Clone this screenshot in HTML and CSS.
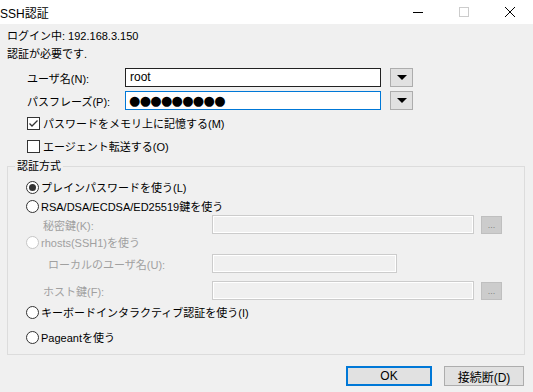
FILE: index.html
```html
<!DOCTYPE html>
<html lang="ja">
<head>
    <meta charset="UTF-8">
    <title>SSH認証</title>
    <link rel="stylesheet" href="styles.css">
</head>
<body>

    <!-- タイトルバー -->
    <div class="titlebar">
        <div class="title">SSH認証</div>
        <div class="controls">
            <span class="ctrl">
                <svg width="10" height="10" viewBox="0 0 10 10"><path d="M0 5.5H10" stroke="#000" stroke-width="1"/></svg>
            </span>
            <span class="ctrl">
                <svg width="10" height="10" viewBox="0 0 10 10"><rect x="0.5" y="0.5" width="9" height="9" fill="none" stroke="#ccc" stroke-width="1"/></svg>
            </span>
            <span class="ctrl">
                <svg width="10" height="10" viewBox="0 0 10 10"><path d="M0 0L10 10M10 0L0 10" stroke="#000" stroke-width="1"/></svg>
            </span>
        </div>
    </div>

    <div class="content">
        <div class="line">ログイン中: 192.168.3.150</div>
        <div class="line">認証が必要です.</div>

        <div class="row row-user">
            <span class="label">ユーザ名(N):</span>
            <div class="edit">root</div>
            <span class="drop"><span class="tri"></span></span>
        </div>
        <div class="row row-pass">
            <span class="label">パスフレーズ(P):</span>
            <div class="edit focus dots">●●●●●●●●●</div>
            <span class="drop"><span class="tri"></span></span>
        </div>

        <div class="check check-1">
            <span class="box checked">
                <svg width="11" height="11" viewBox="0 0 11 11"><path d="M1.5 5.5L4 8L9.5 2.5" fill="none" stroke="#333" stroke-width="1.3"/></svg>
            </span>
            <span>パスワードをメモリ上に記憶する(M)</span>
        </div>
        <div class="check check-2">
            <span class="box"></span>
            <span>エージェント転送する(O)</span>
        </div>

        <fieldset class="group">
            <legend>認証方式</legend>

            <div class="radio r1"><span class="dot on"></span>プレインパスワードを使う(L)</div>
            <div class="radio r2"><span class="dot"></span>RSA/DSA/ECDSA/ED25519鍵を使う</div>

            <div class="sub sub-key">
                <span class="sublabel">秘密鍵(K):</span>
                <div class="edit off wide"></div>
                <span class="more">...</span>
            </div>

            <div class="radio r3 disabled"><span class="dot"></span>rhosts(SSH1)を使う</div>

            <div class="sub sub-local">
                <span class="sublabel indent">ローカルのユーザ名(U):</span>
                <div class="edit off narrow"></div>
            </div>
            <div class="sub sub-host">
                <span class="sublabel">ホスト鍵(F):</span>
                <div class="edit off wide"></div>
                <span class="more">...</span>
            </div>

            <div class="radio r4"><span class="dot"></span>キーボードインタラクティブ認証を使う(I)</div>
            <div class="radio r5"><span class="dot"></span>Pageantを使う</div>
        </fieldset>

        <div class="buttons">
            <button class="btn default">OK</button>
            <button class="btn">接続断(D)</button>
        </div>
    </div>

</body>
</html>
```

FILE: styles.css
```css
body {
    margin: 0;
    width: 533px;
    height: 392px;
    overflow: hidden;
    background-color: #f0f0f0;
    font-family: "Liberation Sans", "Noto Sans CJK JP", sans-serif;
    font-size: 11px;
    color: #000;
}
.titlebar {
    height: 24px;
    background-color: #fff;
    display: flex;
    align-items: center;
    justify-content: space-between;
}
.title {
    font-size: 12px;
}
.controls {
    display: flex;
    height: 24px;
}
.ctrl {
    width: 46px;
    display: flex;
    align-items: center;
    justify-content: center;
}
.content {
    padding: 3px 9px 0 7px;
}
.line {
    height: 18px;
    line-height: 18px;
}
.row {
    display: flex;
    align-items: center;
    height: 19px;
    padding-left: 20px;
}
.row-user {
    margin-top: 5px;
}
.row-pass {
    margin-top: 4px;
}
.label {
    width: 98px;
}
.edit {
    box-sizing: border-box;
    height: 19px;
    border: 1px solid #222;
    background-color: #fff;
    padding: 0 4px;
    line-height: 17px;
    font-size: 12px;
}
.row .edit {
    width: 256px;
}
.edit.focus {
    border-color: #0078d7;
}
.dots {
    font-family: "DejaVu Sans", sans-serif;
    font-size: 13px;
    letter-spacing: -0.7px;
    padding-left: 3px;
}
.drop {
    box-sizing: border-box;
    width: 23px;
    height: 19px;
    margin-left: 9px;
    background-color: #e1e1e1;
    border: 1px solid #adadad;
    display: flex;
    align-items: center;
    justify-content: center;
}
.tri {
    width: 0;
    height: 0;
    border-left: 5px solid transparent;
    border-right: 5px solid transparent;
    border-top: 5px solid #000;
}
.check {
    display: flex;
    align-items: center;
    height: 16px;
    padding-left: 20px;
}
.check-1 {
    margin-top: 5px;
}
.check-2 {
    margin-top: 7px;
}
.box {
    box-sizing: border-box;
    width: 13px;
    height: 13px;
    border: 1px solid #333;
    background-color: #fff;
    margin-right: 3px;
    display: flex;
    align-items: center;
    justify-content: center;
}
.group {
    margin: 4px 0 0 0;
    padding: 0 0 10px 0;
    border: 1px solid #dcdcdc;
    width: 516px;
}
.group legend {
    margin-left: 7px;
    padding: 0 2px;
    line-height: 16px;
}
.radio {
    display: flex;
    align-items: center;
    height: 14px;
    padding-left: 18px;
}
.r1 {
    margin-top: 6px;
}
.r2 {
    margin-top: 5px;
}
.r3 {
    margin-top: 1px;
}
.r4 {
    margin-top: 5px;
}
.r5 {
    margin-top: 11px;
}
.dot {
    box-sizing: border-box;
    width: 13px;
    height: 13px;
    border: 1px solid #333;
    border-radius: 50%;
    background-color: #fff;
    margin-right: 2px;
    display: flex;
    align-items: center;
    justify-content: center;
}
.dot.on::after {
    content: "";
    width: 7px;
    height: 7px;
    border-radius: 50%;
    background-color: #333;
}
.disabled {
    color: #a0a0a0;
}
.disabled .dot {
    border-color: #c6c6c6;
}
.sub {
    display: flex;
    align-items: center;
    height: 19px;
}
.sub-key {
    margin-top: 2px;
}
.sub-local {
    margin-top: 5px;
}
.sub-host {
    margin-top: 8px;
}
.sublabel {
    width: 204px;
    padding-left: 35px;
    box-sizing: border-box;
    color: #a0a0a0;
}
.sublabel.indent {
    padding-left: 40px;
}
.edit.off {
    background-color: #f0f0f0;
    border-color: #cccccc;
    box-shadow: inset 0 0 0 1px #fff;
}
.wide {
    width: 262px;
}
.narrow {
    width: 185px;
}
.more {
    box-sizing: border-box;
    width: 21px;
    height: 18px;
    margin-left: 7px;
    background-color: #cccccc;
    border: 1px solid #bfbfbf;
    color: #838383;
    font-size: 9px;
    text-align: center;
    line-height: 16px;
}
.buttons {
    display: flex;
    justify-content: flex-end;
    gap: 12px;
    margin-top: 11px;
}
.btn {
    box-sizing: border-box;
    height: 20px;
    width: 80px;
    padding: 0;
    background-color: #e1e1e1;
    border: 1px solid #adadad;
    font-family: "Liberation Sans", "Noto Sans CJK JP", sans-serif;
    font-size: 12px;
    color: #000;
}
.btn.default {
    width: 86px;
    border: 2px solid #0078d7;
}
```
